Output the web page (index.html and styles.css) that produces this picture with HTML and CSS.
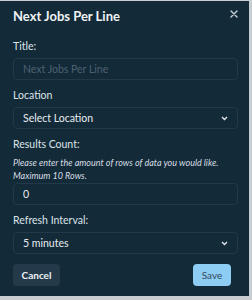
FILE: index.html
```html
<!DOCTYPE html>
<html lang="en">
<head>
    <meta charset="UTF-8">
    <meta name="viewport" content="width=device-width, initial-scale=1.0">
    <title>Next Jobs Per Line</title>
    <link rel="stylesheet" href="styles.css">
</head>
<body>
<div class="modal">
    <div class="modal-header">
        <h2>Next Jobs Per Line</h2>
        <button class="close" type="button" aria-label="Close">
            <svg width="8" height="8" viewBox="0 0 8 8"><path d="M1 1L7 7M7 1L1 7" stroke="#c9d2d9" stroke-width="1.4" stroke-linecap="round"/></svg>
        </button>
    </div>
    <form class="modal-body">
        <label for="title">Title:</label>
        <input type="text" id="title" class="field" placeholder="Next Jobs Per Line">

        <label for="location">Location</label>
        <div class="field select" id="location">
            <span>Select Location</span>
            <svg width="7" height="5" viewBox="0 0 7 5"><path d="M1 1L3.5 3.5L6 1" stroke="#dfe6eb" stroke-width="1.4" fill="none"/></svg>
        </div>

        <label for="count">Results Count:</label>
        <p class="help">Please enter the amount of rows of data you would like.<br>Maximum 10 Rows.</p>
        <input type="text" id="count" class="field count" value="0">

        <label for="interval">Refresh Interval:</label>
        <div class="field select" id="interval">
            <span>5 minutes</span>
            <svg width="7" height="5" viewBox="0 0 7 5"><path d="M1 1L3.5 3.5L6 1" stroke="#dfe6eb" stroke-width="1.4" fill="none"/></svg>
        </div>

        <div class="actions">
            <button type="button" class="btn cancel">Cancel</button>
            <button type="submit" class="btn save">Save</button>
        </div>
    </form>
</div>
</body>
</html>
```

FILE: styles.css
```css
body {
    margin: 0;
    padding: 1px 0 0 0;
    background: #c8cdd1;
    font-family: Lato, 'Open Sans', sans-serif;
    height: 300px;
    box-sizing: border-box;
}

.modal {
    width: 249px;
    height: 295px;
    background: #132a39;
    color: #e8edf0;
    box-sizing: border-box;
    padding: 0 11px 0 13px;
}

.modal-header {
    display: flex;
    justify-content: space-between;
    align-items: center;
    height: 30px;
}

.modal-header h2 {
    margin: 0;
    font-size: 13px;
    font-weight: 700;
    color: #eef2f4;
}

.close {
    background: none;
    border: none;
    padding: 0;
    margin-top: -4px;
    display: flex;
}

.modal-body {
    display: flex;
    flex-direction: column;
    width: 225px;
    padding-top: 8px;
}

label {
    display: block;
    font-size: 10.5px;
    color: #dde4e8;
    margin: 0 0 5px;
    line-height: 14px;
}

.help {
    margin: 0 0 1px;
    font-size: 9px;
    font-style: italic;
    line-height: 13px;
    color: #d6dde2;
}

.field {
    box-sizing: border-box;
    height: 22px;
    width: 225px;
    border: 1px solid #22394a;
    border-radius: 4px;
    background: #132a39;
    color: #e8edf0;
    font-family: inherit;
    font-size: 10.5px;
    padding: 0 9px;
    margin: 0 0 8px;
    outline: none;
}

.field::placeholder {
    color: #4d6170;
}

.select {
    display: flex;
    align-items: center;
    justify-content: space-between;
    padding-right: 9px;
}

.actions {
    display: flex;
    justify-content: space-between;
    margin-top: 2px;
    padding-right: 7px;
}

.btn {
    height: 22px;
    border: none;
    border-radius: 4px;
    font-family: inherit;
    font-size: 10px;
    font-weight: 700;
    padding: 0;
}

.cancel {
    background: #243a4a;
    color: #eef2f4;
    width: 47px;
}

.save {
    background: #8ecdf3;
    color: #34485a;
    font-weight: 400;
    width: 38px;
}
```
